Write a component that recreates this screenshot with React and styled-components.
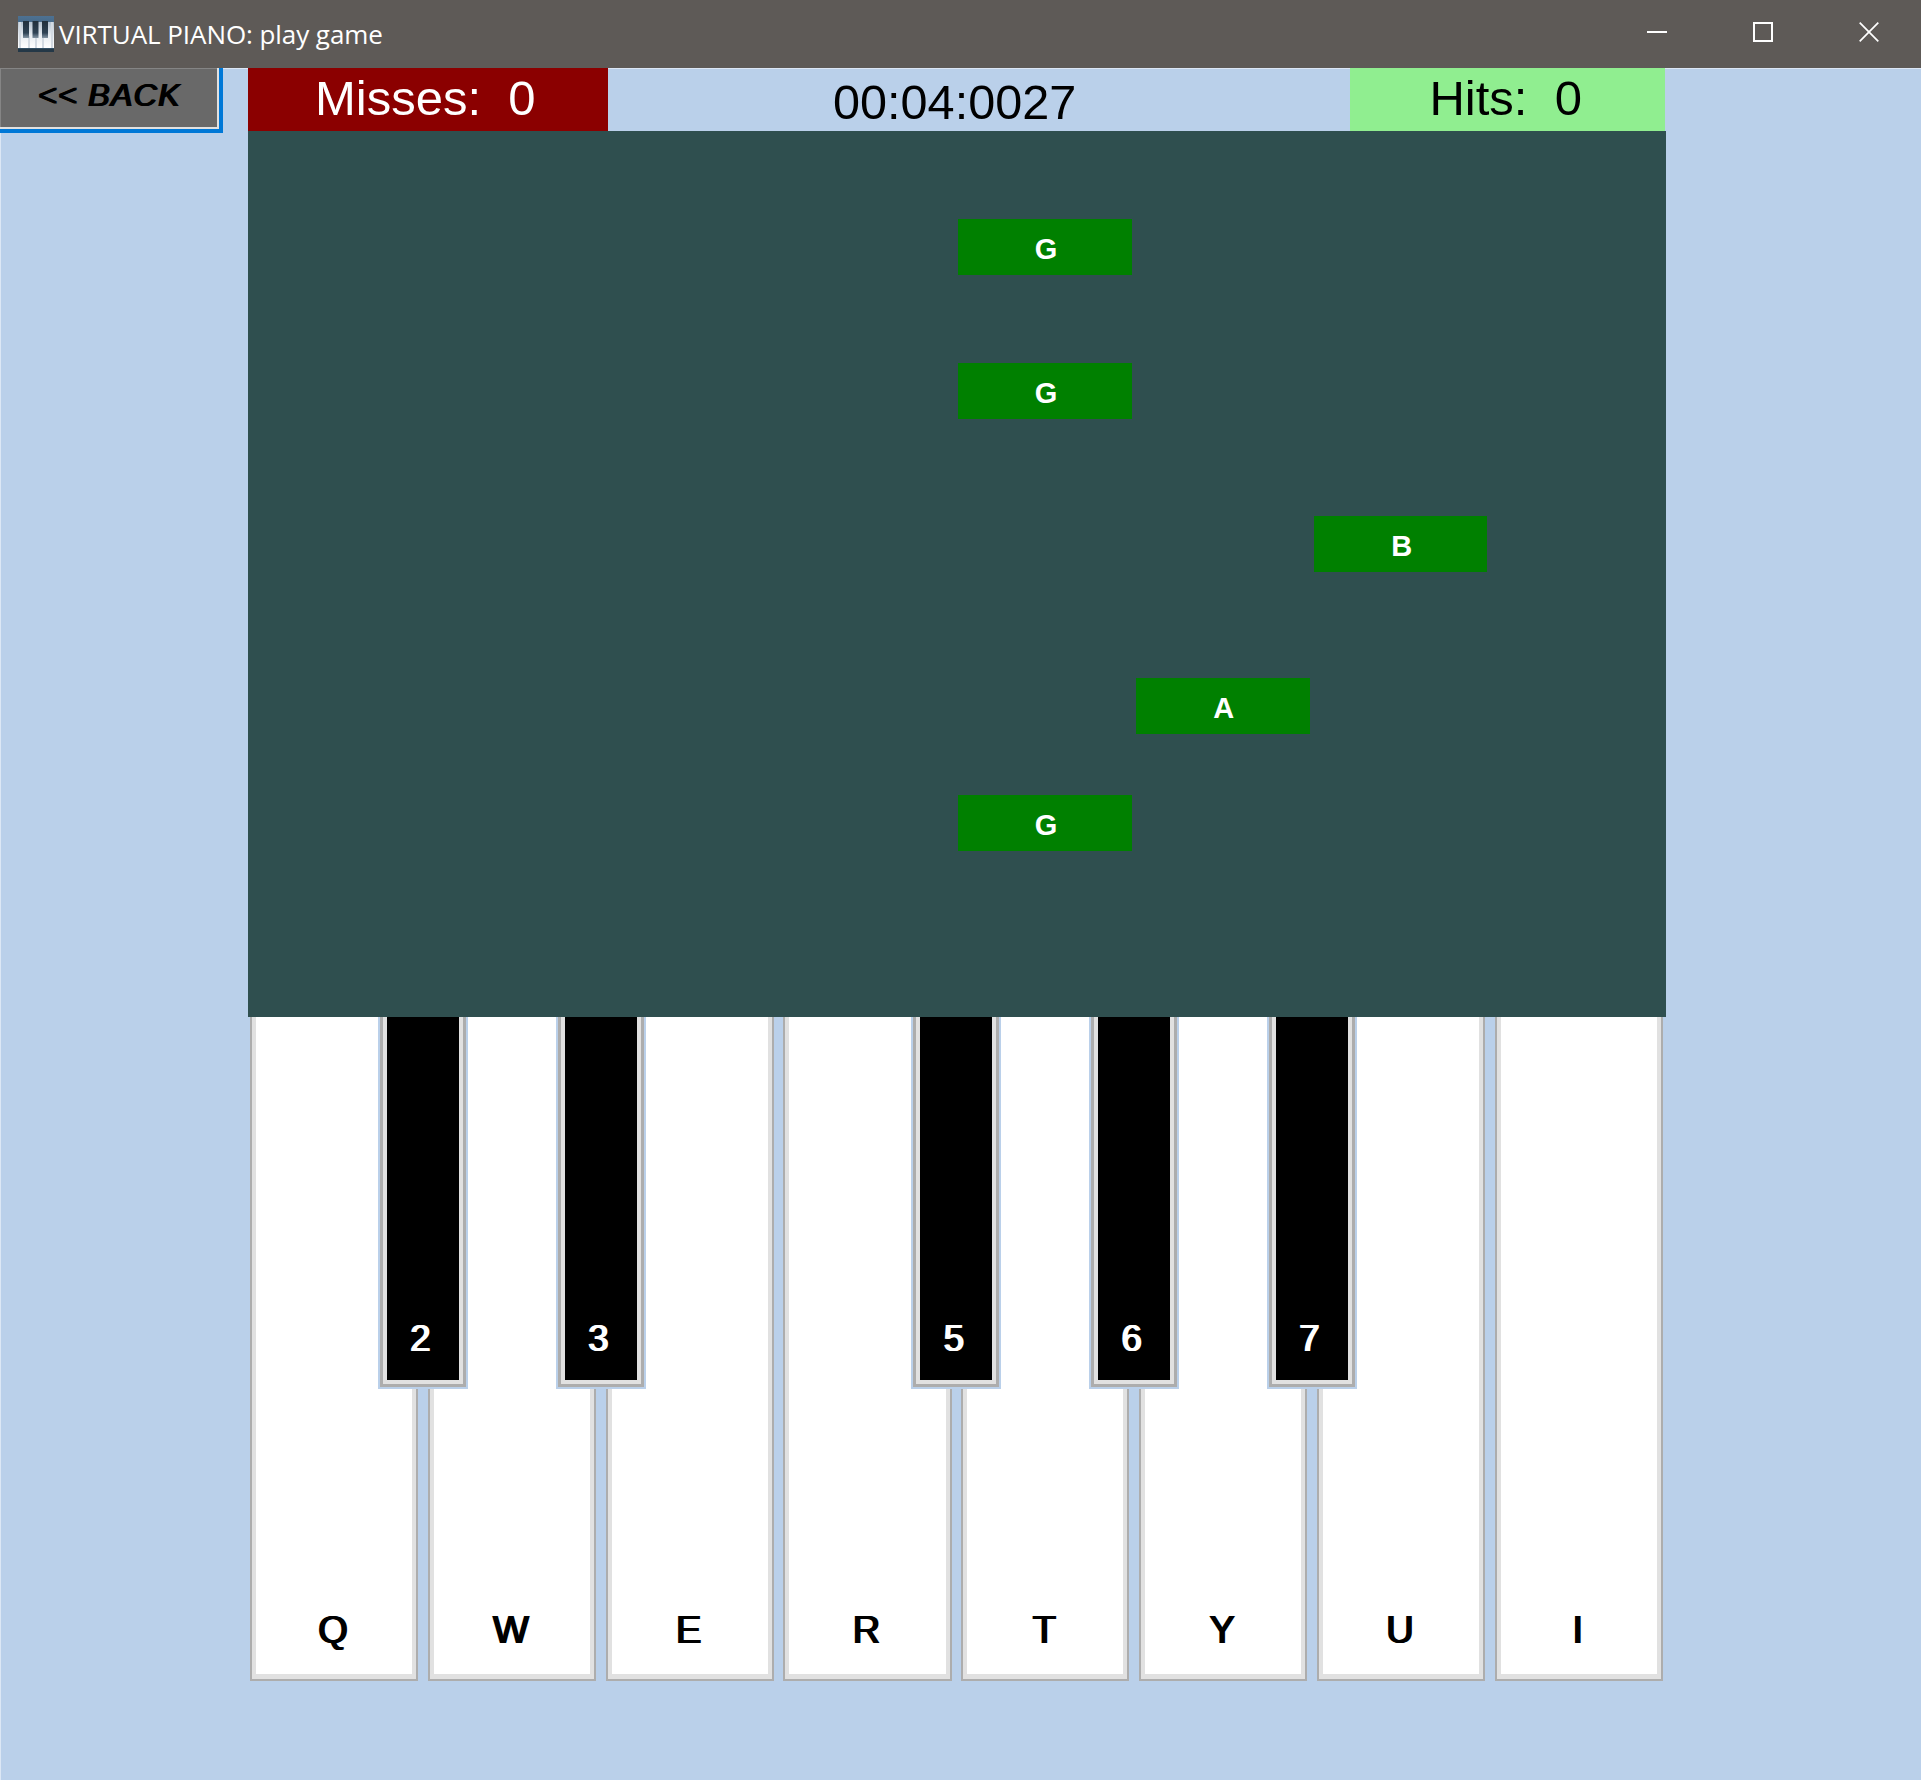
import React from "react";
import styled, { createGlobalStyle } from "styled-components";

const Global = createGlobalStyle`
  * { box-sizing: border-box; }
  body { margin: 0; background: #bad0ea; font-family: "Liberation Sans", Arial, sans-serif; overflow: hidden; }
  button { font-family: inherit; }
`;

const Window = styled.div`
  width: 1921px;
  height: 1780px;
  background: #bad0ea;
  display: flex;
  flex-direction: column;
  overflow: hidden;
`;

const TitleBar = styled.header`
  height: 68px;
  flex: none;
  background: #5e5a57;
  display: flex;
  align-items: center;
  padding-left: 18px;
`;

const Title = styled.h1`
  margin: 0 0 0 5px;
  flex: 1;
  color: #fff;
  font: 400 26px/40px "Open Sans", "Noto Sans", sans-serif;
  letter-spacing: -0.07px;
  white-space: nowrap;
`;

const Controls = styled.div`
  display: flex;
  margin-right: -1px;
`;

const Control = styled.button`
  width: 106px;
  height: 68px;
  padding: 0 0 4px;
  border: 0;
  background: none;
  display: flex;
  align-items: center;
  justify-content: center;
`;

const Client = styled.main`
  flex: 1;
  display: flex;
  align-items: flex-start;
  border-top: 1px solid #dce7f5;
  border-left: 1px solid #dce7f5;
`;

const BackButton = styled.button`
  width: 223px;
  height: 65px;
  margin: -1px 25px 0 -1px;
  padding: 0 2px 6px 0;
  flex: none;
  background: #696969;
  border: solid #0078d7;
  border-width: 0 4px 4px 0;
  box-shadow: inset -2px -2px 0 #e1e1e1, inset 1px 1px 0 #858585;
  color: #000;
  font-size: 32px;
  font-style: italic;
  letter-spacing: 1.4px;
  text-shadow: 1px 0 0 #000, 2px 0 0 #000;
  white-space: nowrap;
`;

const Game = styled.section`
  width: 1417.5px;
  flex: none;
`;

const ScoreBar = styled.div`
  height: 62px;
  display: flex;
  justify-content: space-between;
`;

const Score = styled.div`
  width: ${(p) => p.$width}px;
  height: 63px;
  margin-top: -1px;
  padding-left: ${(p) => p.$indent}px;
  padding-top: ${(p) => p.$drop || 0}px;
  background: ${(p) => p.$bg || "transparent"};
  color: ${(p) => p.$color || "#000"};
  font-size: ${(p) => p.$size || 49}px;
  line-height: 60px;
  white-space: pre;
`;

const Board = styled.div`
  position: relative;
  height: 886px;
  background: #2f4f4f;
`;

const Note = styled.div`
  position: absolute;
  left: ${(p) => p.$lane * 177.8 - 0.9}px;
  top: ${(p) => p.$top}px;
  width: 173.5px;
  height: 56px;
  padding: 5px 0 0 2px;
  background: #008000;
  color: #fff;
  display: flex;
  align-items: center;
  justify-content: center;
  font-size: 29px;
  font-weight: 700;
`;

const Keyboard = styled.div`
  display: flex;
  gap: 9.5px;
  padding-left: 2px;
`;

const WhiteKey = styled.div`
  position: relative;
  flex: none;
  width: 168.3px;
  height: 664px;
  background: #fff;
  border: 2px solid #adadad;
  border-top: 0;
  box-shadow: inset 4px 0 0 #e1e1e1, inset -4px 0 0 #e1e1e1, inset 0 -5px 0 #e1e1e1;
  display: flex;
  align-items: flex-end;
  justify-content: center;
  padding: 0 4px 29px 0;
  color: #000;
  font-size: 38px;
  text-shadow: 1px 0 0 #000, 2px 0 0 #000;
  line-height: 40px;
`;

const BlackKey = styled.div`
  position: absolute;
  z-index: 1;
  left: 126px;
  top: 0;
  width: 90px;
  height: 371.5px;
  background: #000;
  border: 2px solid #bad0ea;
  border-top: 0;
  box-shadow: inset 3px 0 0 #adadad, inset -3px 0 0 #adadad, inset 0 -3px 0 #adadad,
    inset 7px 0 0 #e1e1e1, inset -7px 0 0 #e1e1e1, inset 0 -7px 0 #e1e1e1;
  display: flex;
  align-items: flex-end;
  justify-content: center;
  padding: 0 7px 28px 0;
  color: #fff;
  font-size: 36.5px;
  text-shadow: 1px 0 0 #fff, 2px 0 0 #fff;
  line-height: 40px;
`;

const PianoIcon = () => (
  <svg width="36" height="36" viewBox="0 0 36 36">
    <defs>
      <linearGradient id="case" x2="0" y2="1">
        <stop offset="0" stopColor="#4d7192" />
        <stop offset="1" stopColor="#304c60" />
      </linearGradient>
      <linearGradient id="ivory" x2="0" y2="1">
        <stop offset="0" stopColor="#b3c2d0" />
        <stop offset=".5" stopColor="#e6ebf0" />
        <stop offset="1" stopColor="#fff" />
      </linearGradient>
      <linearGradient id="ebony" x2="0" y2="1">
        <stop offset="0" stopColor="#22303c" />
        <stop offset=".7" stopColor="#2f4355" />
        <stop offset="1" stopColor="#8496a5" />
      </linearGradient>
    </defs>
    <rect width="36" height="36" fill="url(#case)" />
    <rect y="6" width="36" height="26" fill="url(#ivory)" />
    <path d="M11 20v12M18 20v12M25 20v12M2 6v26M34 6v26" stroke="#d3dae2" strokeWidth="2" />
    <path d="M5 5h6v17H5zM14.500 5h6v17h-6zM24 5h6v17h-6z" fill="url(#ebony)" />
    <path d="M0 33h36v3H0z" fill="#243847" />
  </svg>
);

const notes = [
  { name: "G", lane: 4, top: 87.5 },
  { name: "G", lane: 4, top: 231.5 },
  { name: "B", lane: 6, top: 384.5 },
  { name: "A", lane: 5, top: 546.5 },
  { name: "G", lane: 4, top: 663.5 },
];

const keys = [
  { name: "Q", sharp: "2" },
  { name: "W", sharp: "3" },
  { name: "E" },
  { name: "R", sharp: "5" },
  { name: "T", sharp: "6" },
  { name: "Y", sharp: "7" },
  { name: "U" },
  { name: "I" },
];

export default function App() {
  return (
    <Window>
      <Global />
      <TitleBar>
        <PianoIcon />
        <Title>VIRTUAL PIANO: play game</Title>
        <Controls>
          <Control aria-label="Minimize">
            <svg width="20" height="20"><path d="M0 10h20" stroke="#fff" strokeWidth="2" /></svg>
          </Control>
          <Control aria-label="Maximize">
            <svg width="20" height="20"><path d="M1 1h18v18H1z" fill="none" stroke="#fff" strokeWidth="2" /></svg>
          </Control>
          <Control aria-label="Close">
            <svg width="20" height="20"><path d="M.7.700l18.600 18.600M19.300.700L.700 19.300" stroke="#fff" strokeWidth="1.700" /></svg>
          </Control>
        </Controls>
      </TitleBar>
      <Client>
        <BackButton>{"<< BACK"}</BackButton>
        <Game>
          <ScoreBar>
            <Score $width={360} $indent={67} $bg="#8b0000" $color="#fff">{"Misses:  0"}</Score>
            <Score $width={742.4} $indent={225} $drop={4} $size={48.6}>00:04:0027</Score>
            <Score $width={315} $indent={79} $bg="#90ee90">{"Hits:  0"}</Score>
          </ScoreBar>
          <Board>
            {notes.map((n, i) => (
              <Note key={i} $lane={n.lane} $top={n.top}>{n.name}</Note>
            ))}
          </Board>
          <Keyboard>
            {keys.map((k) => (
              <WhiteKey key={k.name}>
                {k.name}
                {k.sharp && <BlackKey>{k.sharp}</BlackKey>}
              </WhiteKey>
            ))}
          </Keyboard>
        </Game>
      </Client>
    </Window>
  );
}
